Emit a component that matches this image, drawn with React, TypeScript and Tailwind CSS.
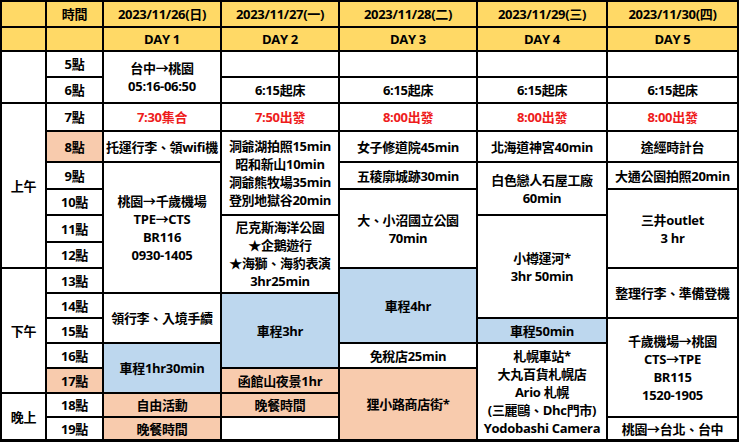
const Y = "bg-[#ffd966]";
const P = "bg-[#f8cbad]";
const B = "bg-[#bdd7ee]";
const W = "bg-white";

type Cell = { pos: string; bg: string; lines: string[]; red?: boolean };

const cells: Cell[] = [
  // header rows
  { pos: "col-start-1 row-start-1", bg: Y, lines: [] },
  { pos: "col-start-2 row-start-1", bg: Y, lines: ["時間"] },
  { pos: "col-start-3 row-start-1", bg: Y, lines: ["2023/11/26(日)"] },
  { pos: "col-start-4 row-start-1", bg: Y, lines: ["2023/11/27(一)"] },
  { pos: "col-start-5 row-start-1", bg: Y, lines: ["2023/11/28(二)"] },
  { pos: "col-start-6 row-start-1", bg: Y, lines: ["2023/11/29(三)"] },
  { pos: "col-start-7 row-start-1", bg: Y, lines: ["2023/11/30(四)"] },
  { pos: "col-start-1 row-start-2", bg: Y, lines: [] },
  { pos: "col-start-2 row-start-2", bg: Y, lines: [] },
  { pos: "col-start-3 row-start-2", bg: Y, lines: ["DAY 1"] },
  { pos: "col-start-4 row-start-2", bg: Y, lines: ["DAY 2"] },
  { pos: "col-start-5 row-start-2", bg: Y, lines: ["DAY 3"] },
  { pos: "col-start-6 row-start-2", bg: Y, lines: ["DAY 4"] },
  { pos: "col-start-7 row-start-2", bg: Y, lines: ["DAY 5"] },

  // period column
  { pos: "col-start-1 row-start-3 row-span-2", bg: W, lines: [] },
  { pos: "col-start-1 row-start-5 row-span-6", bg: W, lines: ["上午"] },
  { pos: "col-start-1 row-start-11 row-span-5", bg: W, lines: ["下午"] },
  { pos: "col-start-1 row-start-16 row-span-2", bg: W, lines: ["晚上"] },

  // hours
  { pos: "col-start-2 row-start-3", bg: W, lines: ["5點"] },
  { pos: "col-start-2 row-start-4", bg: W, lines: ["6點"] },
  { pos: "col-start-2 row-start-5", bg: W, lines: ["7點"] },
  { pos: "col-start-2 row-start-6", bg: P, lines: ["8點"] },
  { pos: "col-start-2 row-start-7", bg: W, lines: ["9點"] },
  { pos: "col-start-2 row-start-8", bg: W, lines: ["10點"] },
  { pos: "col-start-2 row-start-9", bg: W, lines: ["11點"] },
  { pos: "col-start-2 row-start-10", bg: W, lines: ["12點"] },
  { pos: "col-start-2 row-start-11", bg: W, lines: ["13點"] },
  { pos: "col-start-2 row-start-12", bg: W, lines: ["14點"] },
  { pos: "col-start-2 row-start-13", bg: W, lines: ["15點"] },
  { pos: "col-start-2 row-start-14", bg: W, lines: ["16點"] },
  { pos: "col-start-2 row-start-15", bg: P, lines: ["17點"] },
  { pos: "col-start-2 row-start-16", bg: W, lines: ["18點"] },
  { pos: "col-start-2 row-start-17", bg: W, lines: ["19點"] },

  // day 1
  { pos: "col-start-3 row-start-3 row-span-2", bg: W, lines: ["台中→桃園", "05:16-06:50"] },
  { pos: "col-start-3 row-start-5", bg: W, lines: ["7:30集合"], red: true },
  { pos: "col-start-3 row-start-6", bg: W, lines: ["托運行李、領wifi機"] },
  { pos: "col-start-3 row-start-7 row-span-5", bg: W, lines: ["桃園→千歲機場", "TPE→CTS", "BR116", "0930-1405"] },
  { pos: "col-start-3 row-start-12 row-span-2", bg: W, lines: ["領行李、入境手續"] },
  { pos: "col-start-3 row-start-14 row-span-2", bg: B, lines: ["車程1hr30min"] },
  { pos: "col-start-3 row-start-16", bg: P, lines: ["自由活動"] },
  { pos: "col-start-3 row-start-17", bg: P, lines: ["晚餐時間"] },

  // day 2
  { pos: "col-start-4 row-start-3", bg: W, lines: [] },
  { pos: "col-start-4 row-start-4", bg: W, lines: ["6:15起床"] },
  { pos: "col-start-4 row-start-5", bg: W, lines: ["7:50出發"], red: true },
  { pos: "col-start-4 row-start-6 row-span-3", bg: W, lines: ["洞爺湖拍照15min", "昭和新山10min", "洞爺熊牧場35min", "登別地獄谷20min"] },
  { pos: "col-start-4 row-start-9 row-span-3", bg: W, lines: ["尼克斯海洋公園", "★企鵝遊行", "★海獅、海豹表演", "3hr25min"] },
  { pos: "col-start-4 row-start-12 row-span-3", bg: B, lines: ["車程3hr"] },
  { pos: "col-start-4 row-start-15", bg: P, lines: ["函館山夜景1hr"] },
  { pos: "col-start-4 row-start-16", bg: P, lines: ["晚餐時間"] },
  { pos: "col-start-4 row-start-17", bg: W, lines: [] },

  // day 3
  { pos: "col-start-5 row-start-3", bg: W, lines: [] },
  { pos: "col-start-5 row-start-4", bg: W, lines: ["6:15起床"] },
  { pos: "col-start-5 row-start-5", bg: W, lines: ["8:00出發"], red: true },
  { pos: "col-start-5 row-start-6", bg: W, lines: ["女子修道院45min"] },
  { pos: "col-start-5 row-start-7", bg: W, lines: ["五稜廓城跡30min"] },
  { pos: "col-start-5 row-start-8 row-span-3", bg: W, lines: ["大、小沼國立公園", "70min"] },
  { pos: "col-start-5 row-start-11 row-span-3", bg: B, lines: ["車程4hr"] },
  { pos: "col-start-5 row-start-14", bg: W, lines: ["免稅店25min"] },
  { pos: "col-start-5 row-start-15 row-span-3", bg: P, lines: ["狸小路商店街*"] },

  // day 4
  { pos: "col-start-6 row-start-3", bg: W, lines: [] },
  { pos: "col-start-6 row-start-4", bg: W, lines: ["6:15起床"] },
  { pos: "col-start-6 row-start-5", bg: W, lines: ["8:00出發"], red: true },
  { pos: "col-start-6 row-start-6", bg: W, lines: ["北海道神宮40min"] },
  { pos: "col-start-6 row-start-7 row-span-2", bg: W, lines: ["白色戀人石屋工廠", "60min"] },
  { pos: "col-start-6 row-start-9 row-span-4", bg: W, lines: ["小樽運河*", "3hr 50min"] },
  { pos: "col-start-6 row-start-13", bg: B, lines: ["車程50min"] },
  { pos: "col-start-6 row-start-14 row-span-4", bg: W, lines: ["札幌車站*", "大丸百貨札幌店", "Ario 札幌", "(三麗鷗、Dhc門市)", "Yodobashi Camera"] },

  // day 5
  { pos: "col-start-7 row-start-3", bg: W, lines: [] },
  { pos: "col-start-7 row-start-4", bg: W, lines: ["6:15起床"] },
  { pos: "col-start-7 row-start-5", bg: W, lines: ["8:00出發"], red: true },
  { pos: "col-start-7 row-start-6", bg: W, lines: ["途經時計台"] },
  { pos: "col-start-7 row-start-7", bg: W, lines: ["大通公園拍照20min"] },
  { pos: "col-start-7 row-start-8 row-span-3", bg: W, lines: ["三井outlet", "3 hr"] },
  { pos: "col-start-7 row-start-11 row-span-2", bg: W, lines: ["整理行李、準備登機"] },
  { pos: "col-start-7 row-start-13 row-span-4", bg: W, lines: ["千歲機場→桃園", "CTS→TPE", "BR115", "1520-1905"] },
  { pos: "col-start-7 row-start-17", bg: W, lines: ["桃園→台北、台中"] },
];

export default function App() {
  return (
    <div
      className="w-[740px] h-[446px] bg-white overflow-hidden"
      style={{ fontFamily: '"Open Sans", "Noto Sans CJK TC", sans-serif' }}
    >
      <div className="grid w-[739px] grid-cols-[43px_55px_116px_116px_136px_128px_129px] grid-rows-[24px_22px_24px_24px_26px_29px_25px_24px_25px_24px_23px_23px_23px_23px_23px_22px_21px] gap-[2px] bg-black pt-[2px] px-[2px] pb-[3px]">
        {cells.map((c, i) => (
          <div
            key={i}
            className={`${c.pos} ${c.bg} flex flex-col items-center justify-center text-center whitespace-nowrap text-[13px] leading-[18px] font-bold tracking-[-0.3px] ${
              c.red ? "text-[#ee1c1c]" : "text-black"
            }`}
          >
            {c.lines.map((l, j) => (
              <span key={j}>{l}</span>
            ))}
          </div>
        ))}
      </div>
    </div>
  );
}
